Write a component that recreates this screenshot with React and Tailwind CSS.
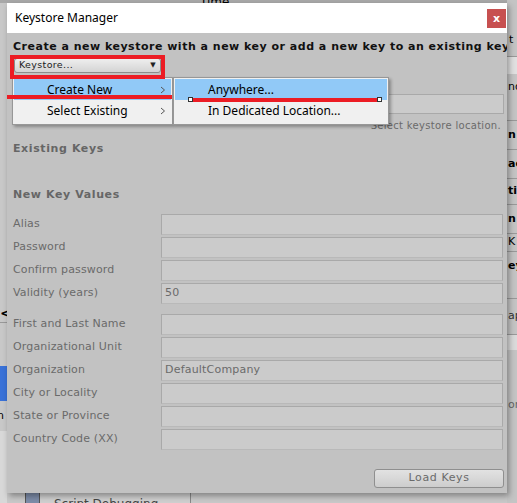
import React from 'react';

const ui = { fontFamily: '"DejaVu Sans", Verdana, sans-serif' };
const win = { fontFamily: '"Noto Sans", "Noto Sans CJK KR", sans-serif' };

const rows1 = [
  { label: 'Alias', value: '' },
  { label: 'Password', value: '' },
  { label: 'Confirm password', value: '' },
  { label: 'Validity (years)', value: '50' },
];

const rows2 = [
  { label: 'First and Last Name', value: '' },
  { label: 'Organizational Unit', value: '' },
  { label: 'Organization', value: 'DefaultCompany' },
  { label: 'City or Locality', value: '' },
  { label: 'State or Province', value: '' },
  { label: 'Country Code (XX)', value: '' },
];

// slices of the inspector that peeks out on the right of the dialog
const rightStrip = [
  { h: 'h-[57px]', text: 't', cls: 'items-end pb-[8px] pl-[2px] text-black', line: true },
  { h: 'h-[17px]', text: '', cls: 'bg-[#e0e0e0]', line: false },
  { h: 'h-[47px]', text: 'nd', cls: 'items-start pt-[5px] text-black', line: true },
  { h: 'h-[29px]', text: 'n a', cls: 'items-center font-bold text-black', line: true },
  { h: 'h-[29px]', text: 'ac', cls: 'items-center font-bold text-black', line: true },
  { h: 'h-[26px]', text: 'tir', cls: 'items-center font-bold text-black', line: true },
  { h: 'h-[29px]', text: 'n S', cls: 'items-center font-bold text-black', line: true },
  { h: 'h-[18px]', text: 'K', cls: 'items-center text-black', line: true },
  { h: 'h-[47px]', text: 'ey', cls: 'items-start pt-[6px] font-bold text-black', line: true },
  { h: 'h-[36px]', text: 'ap', cls: 'items-center text-[#333]', line: true },
  { h: 'h-[15px]', text: '', cls: 'bg-[#dadada]', line: false },
  { h: 'h-[150px]', text: 'or', cls: 'items-start pt-[47px] text-[#666]', line: false },
];

const Field = ({ label, value }) => (
  <div className="flex items-center h-[23px]">
    <div className="w-[154px] pl-[6px] text-[11px] tracking-[0.15px] text-[#6a6a6a]">{label}</div>
    <div className="w-[342px] h-[21px] bg-[#cbcbcb] border border-[#a9a9a9] border-b-[#b9b9b9] flex items-center px-[3px] text-[11px] tracking-[0.2px] text-[#6a6a6a]">
      {value}
    </div>
  </div>
);

// the editor window behind the dialog
const Backdrop = () => (
  <div className="absolute inset-0 bg-[#c8c8c8] flex" style={ui}>
    <div className="w-[7px] flex flex-col overflow-hidden">
      <div className="h-[3px] bg-[#a8a8a8]" />
      <div className="h-[300px]" />
      <div className="h-[20px] text-[14px] font-bold leading-[20px] text-black border-b border-[#999]">&lt;</div>
      <div className="h-[43px]" />
      <div className="h-[35px] bg-[#3a72d8]" />
      <div className="h-[30px] text-[11px] leading-[30px] -ml-[3px] text-black">n</div>
      <div className="flex-1 bg-[#d8d8d8]" />
    </div>
    <div className="flex-1 flex flex-col">
      <div className="h-[3px] bg-[#a8a8a8] pl-[193px] text-[12px] leading-[4px] text-black overflow-hidden">Time</div>
      <div className="flex-1" />
      <div className="h-[10px] flex">
        <div className="w-[18px]" />
        <div className="w-[15px] bg-[#7d8ca8] border-x border-[#555]" />
        <div className="w-[150px] bg-[#cfcfcf] pl-[14px] text-[12px] leading-[22px] text-[#444] overflow-hidden whitespace-nowrap">
          Script Debugging
        </div>
        <div className="w-[1px] bg-[#888]" />
      </div>
    </div>
    <div className="w-[10px] flex flex-col bg-[#c4c4c4] overflow-hidden">
      {rightStrip.map((r, i) => (
        <div
          key={i}
          className={`${r.h} ${r.cls} flex pl-[1px] text-[11px] whitespace-nowrap ${r.line ? 'border-b border-[#999]' : ''}`}
        >
          {r.text}
        </div>
      ))}
    </div>
  </div>
);

const Chevron = () => (
  <svg width="6" height="8" viewBox="0 0 6 8" className="text-[#555]">
    <path d="M1 1 L4.5 4 L1 7" fill="none" stroke="currentColor" strokeWidth="1" />
  </svg>
);

const Menu = ({ items, width, left }) => (
  <div
    className={`absolute top-[77px] ${left} ${width} h-[48px] bg-[#f0f0f0] border border-[#979797] shadow-[2px_2px_3px_rgba(0,0,0,0.3)] p-[1px] flex flex-col`}
    style={win}
  >
    {items.map((it, i) => (
      <div
        key={it.label}
        className={`${i === 0 ? 'h-[21px] bg-[#91c9f7]' : 'h-[22px]'} flex items-center justify-between pl-[33px] pr-[5px] text-[12px] text-black`}
      >
        <span>{it.label}</span>
        {it.sub && <Chevron />}
      </div>
    ))}
  </div>
);

export default function App() {
  return (
    <div className="relative w-[517px] h-[503px] overflow-hidden">
      <Backdrop />

      {/* dialog window */}
      <div className="absolute left-[7px] top-[3px] w-[500px] h-[490px] flex flex-col shadow-[2px_3px_6px_rgba(0,0,0,0.35)]">
        <div className="h-[30px] bg-white flex items-center justify-between pl-[8px] pr-[1px]" style={win}>
          <span className="text-[12px] text-black">Keystore Manager</span>
          <div className="w-[19px] h-[19px] bg-[#c75050] flex items-center justify-center text-white text-[11px] font-bold leading-none" style={ui}>
            x
          </div>
        </div>
        <div className="flex-1 bg-[#c2c2c2] flex flex-col overflow-hidden" style={ui}>
          <div className="pl-[6px] pt-[6px] text-[11px] font-bold tracking-[0.5px] text-[#111] whitespace-nowrap">
            Create a new keystore with a new key or add a new key to an existing keystore
          </div>
          <div className="ml-[7px] mt-[2px] w-[147px] h-[15px] rounded-[3px] border border-[#8c8c8c] bg-gradient-to-b from-[#eeeeee] to-[#d4d4d4] flex items-center justify-between px-[4px] text-[9.5px] tracking-[0.35px] text-[#222]">
            <span>Keystore...</span>
            <span className="text-[7px]">▼</span>
          </div>
          <div className="mt-[21px] flex justify-end pr-[3px]">
            <div className="w-[342px] h-[20px] bg-[#cbcbcb] border border-[#a9a9a9]" />
          </div>
          <div className="mt-[4px] flex justify-end pr-[6px] text-[10px] tracking-[0.3px] text-[#6a6a6a]">
            Select keystore location.
          </div>
          <div className="mt-[8px] pl-[6px] text-[11px] font-bold tracking-[0.6px] text-[#666]">Existing Keys</div>
          <div className="mt-[30px] pl-[6px] text-[11px] font-bold tracking-[0.6px] text-[#666]">New Key Values</div>
          <div className="mt-[9px] flex flex-col">
            {rows1.map((r) => (
              <Field key={r.label} {...r} />
            ))}
          </div>
          <div className="mt-[8px] flex flex-col">
            {rows2.map((r) => (
              <Field key={r.label} {...r} />
            ))}
          </div>
          <div className="mt-[18px] flex justify-end pr-[3px]">
            <div className="w-[130px] h-[19px] rounded-[3px] border border-[#8f8f8f] bg-gradient-to-b from-[#e2e2e2] to-[#cdcdcd] flex items-center justify-center text-[11px] tracking-[0.6px] text-[#6a6a6a]">
              Load Keys
            </div>
          </div>
        </div>
      </div>

      <Menu
        left="left-[12px]"
        width="w-[161px]"
        items={[
          { label: 'Create New', sub: true },
          { label: 'Select Existing', sub: true },
        ]}
      />
      <Menu
        left="left-[173px]"
        width="w-[216px]"
        items={[{ label: 'Anywhere...' }, { label: 'In Dedicated Location...' }]}
      />

      {/* red annotations */}
      <div className="absolute left-[10px] top-[55px] w-[155px] h-[24px] border-[4px] border-[#ec1c24]" />
      <div className="absolute left-[7px] top-[95px] w-[165px] h-[4px] bg-[#ec1c24]" />
      <div className="absolute left-[188px] top-[97px] w-[194px] h-[5px] flex items-center">
        <div className="w-[5px] h-[5px] bg-white border border-[#333]" />
        <div className="flex-1 h-[4px] bg-[#ec1c24]" />
        <div className="w-[5px] h-[5px] bg-white border border-[#333]" />
      </div>
    </div>
  );
}
